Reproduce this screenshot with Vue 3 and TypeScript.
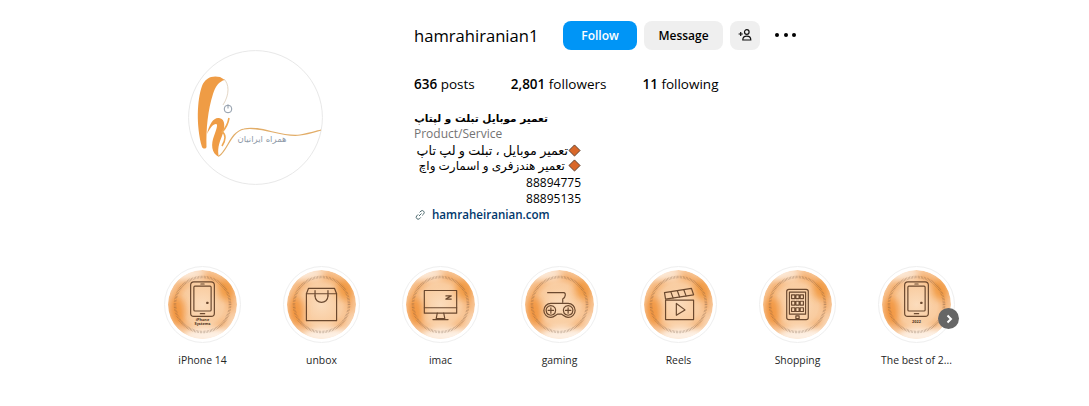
<template>
  <main class="profile">
    <header class="profile-head">
      <div class="avatar">
        <svg viewBox="0 0 135 135" width="135" height="135" aria-hidden="true">
          <circle cx="67.5" cy="67.5" r="66.9" fill="#fff" stroke="#e8e8e8" stroke-width="1" />
          <path
            d="M32 27 C24 25 17 28 14 36 C9 50 8 76 14 97 C15 99 18 99 18.5 97 C18 78 20 60 25 44 C27 37 31 31 37 30 Z"
            fill="#ef9c45"
          />
          <path
            d="M19 84 C21 74 26 67 31 68 C38 69 37 78 34 86 C31 93 29 100 31 107 C23 103 23 94 26 86 C29 78 30 74 28 74 C25 74 22 78 19 84 Z"
            fill="#ef9c45"
          />
          <path d="M36 29 C41 34 42 44 35 55" fill="none" stroke="#dccbb6" stroke-width="0.8" />
          <path d="M41 68 C40 74 38 78 34 82 C38 84 38 90 34 96" fill="none" stroke="#efa854" stroke-width="1.6" />
          <path
            d="M31 106 C40 100 42 82 56 79 C72 75 94 88 112 85 C120 84 126 82 133 80"
            fill="none"
            stroke="#e2ad68"
            stroke-width="1.2"
          />
          <circle cx="40" cy="59" r="3.8" fill="none" stroke="#8e9aa8" stroke-width="1" />
          <path d="M40 54.5 V58.5" stroke="#8e9aa8" stroke-width="1" />
          <text x="74" y="92" class="avatar-text" text-anchor="middle">همراه ایرانیان</text>
        </svg>
      </div>

      <section class="info">
        <div class="top-row">
          <h2>hamrahiranian1</h2>
          <button class="btn btn-follow">Follow</button>
          <button class="btn btn-message">Message</button>
          <button class="btn btn-suggest" aria-label="Suggested">
            <svg viewBox="0 0 14 14" width="14" height="14" fill="none" stroke="#111" stroke-width="1.2">
              <circle cx="8.8" cy="4" r="2.3" />
              <path d="M4.8 12 C4.8 9.4 6.4 8.2 8.8 8.2 C11.2 8.2 12.8 9.4 12.8 12 Z" />
              <path d="M0.6 6 H4.8 M2.7 3.9 V8.1" />
            </svg>
          </button>
          <button class="more" aria-label="Options">
            <i></i><i></i><i></i>
          </button>
        </div>

        <ul class="stats">
          <li v-for="s in stats" :key="s.label"><strong>{{ s.value }}</strong> {{ s.label }}</li>
        </ul>

        <div class="bio">
          <div class="bio-name" dir="rtl">تعمیر موبایل تبلت و لپتاپ</div>
          <div class="bio-cat">Product/Service</div>
          <div class="bio-lines" dir="rtl">
            <div class="line-a">
              <svg class="diamond" viewBox="0 0 14 14" width="13" height="13">
                <path d="M7 1 L13 7 L7 13 L1 7 Z" fill="#d9682a" stroke="#5a3a28" stroke-width="1" />
              </svg>تعمیر موبایل ، تبلت و لپ تاپ
            </div>
            <div class="line-b">
              <svg class="diamond" viewBox="0 0 14 14" width="13" height="13">
                <path d="M7 1 L13 7 L7 13 L1 7 Z" fill="#d9682a" stroke="#5a3a28" stroke-width="1" />
              </svg>
              تعمیر هندزفری و اسمارت واچ
            </div>
            <div class="num">88894775</div>
            <div class="num">88895135</div>
          </div>
          <a class="bio-link">
            <svg viewBox="0 0 12 12" width="12" height="12" fill="none" stroke="#4f6b70" stroke-width="1">
              <path d="M5 7 L7.5 4.5 M4.2 5.4 L2.6 7 A2 2 0 0 0 5.4 9.8 L6.8 8.4 M5.6 3.4 L7 2 A2 2 0 0 1 9.8 4.8 L8.2 6.4" />
            </svg>
            <span>hamraheiranian.com</span>
          </a>
        </div>
      </section>
    </header>

    <section class="highlights">
      <svg class="defs" width="0" height="0" aria-hidden="true">
        <defs>
          <radialGradient id="hl-bg" cx="50%" cy="50%" r="50%">
            <stop offset="0%" stop-color="#fbdcbc" />
            <stop offset="60%" stop-color="#f9cb9e" />
            <stop offset="82%" stop-color="#f5b070" />
            <stop offset="100%" stop-color="#f7c596" />
          </radialGradient>
          <filter id="hl-blur" x="-40%" y="-40%" width="180%" height="180%">
            <feGaussianBlur stdDeviation="3.5" />
          </filter>
        </defs>
      </svg>
      <div v-for="h in highlights" :key="h.label" class="hl">
        <div class="hl-ring">
          <svg viewBox="0 0 64 64" width="69" height="69" aria-hidden="true">
            <circle cx="32" cy="32" r="32" fill="url(#hl-bg)" />
            <g filter="url(#hl-blur)">
              <ellipse cx="9" cy="38" rx="7" ry="13" fill="#f08c2e" opacity="0.75" />
              <ellipse cx="54" cy="18" rx="8" ry="10" fill="#f0902f" opacity="0.7" />
              <ellipse cx="36" cy="60" rx="22" ry="7" fill="#fff" opacity="0.8" />
              <ellipse cx="20" cy="4" rx="15" ry="6" fill="#fff" opacity="0.65" />
              <ellipse cx="58" cy="46" rx="6" ry="10" fill="#fff" opacity="0.3" />
            </g>
            <circle cx="32" cy="32" r="25.5" fill="none" stroke="#6b5140" stroke-width="2.4" stroke-dasharray="0.45 0.9" opacity="0.5" />
            <g fill="none" stroke="#5b3a22" stroke-width="1.1" stroke-linecap="round" stroke-linejoin="round" opacity="0.9">
              <path v-for="d in h.paths" :key="d" :d="d" />
            </g>
            <text v-for="t in h.tags" :key="t.text" x="32" :y="t.y" text-anchor="middle" class="hl-tag">{{ t.text }}</text>
          </svg>
        </div>
        <div class="hl-label">{{ h.label }}</div>
      </div>
      <button class="next" aria-label="Next">
        <svg viewBox="0 0 12 12" width="12" height="12" fill="none" stroke="#fff" stroke-width="2">
          <path d="M4.5 2.5 L8 6 L4.5 9.5" />
        </svg>
      </button>
    </section>
  </main>
</template>

<script setup lang="ts">
type Highlight = {
  label: string
  paths: string[]
  tags?: { text: string; y: number }[]
}

const stats = [
  { value: '636', label: 'posts' },
  { value: '2,801', label: 'followers' },
  { value: '11', label: 'following' },
]

const phone = [
  'M24 11 H40 A3 3 0 0 1 43 14 V40 A3 3 0 0 1 40 43 H24 A3 3 0 0 1 21 40 V14 A3 3 0 0 1 24 11 Z',
  'M25 15 H39 A1 1 0 0 1 40 16 V37 A1 1 0 0 1 39 38 H25 A1 1 0 0 1 24 37 V16 A1 1 0 0 1 25 15 Z',
  'M30.5 13 H33.5',
  'M30 40.5 H34',
  'M36 30 H37 V31 H36 Z',
]

const highlights: Highlight[] = [
  {
    label: 'iPhone 14',
    paths: phone,
    tags: [
      { text: 'iPhone', y: 47 },
      { text: 'Systems', y: 51 },
    ],
  },
  {
    label: 'unbox',
    paths: [
      'M18 22 H46 V47 H18 Z',
      'M18 22 L20 17 H44 L46 22',
      'M26 24 C26 32 38 32 38 24',
      'M26 19 V24 M38 19 V24',
    ],
  },
  {
    label: 'imac',
    paths: [
      'M17 19 H47 V40 H17 Z',
      'M17 35 H47',
      'M29 40 L28 45 H36 L35 40',
      'M25 46 H39',
      'M37 24 H42 L37 27 H42',
    ],
  },
  {
    label: 'gaming',
    paths: [
      'M21 21 H36 C38 21 38 25 35 27 V30',
      'M24 31 H40 A6.5 6.5 0 0 1 40 44 C37 44 36 42 34 41 H30 C28 42 27 44 24 44 A6.5 6.5 0 0 1 24 31 Z',
      'M24 33 A4.5 4.5 0 1 0 24.01 33 Z',
      'M40 33 A4.5 4.5 0 1 0 40.01 33 Z',
      'M24 35 V40 M21.5 37.5 H26.5',
      'M40 35 V40 M37.5 37.5 H42.5',
    ],
  },
  {
    label: 'Reels',
    paths: [
      'M20 28 H46 V46 H20 Z',
      'M19 21 L44 17 L46 23 L20 27 Z',
      'M25 20.5 L27 26 M31 19.5 L33 25 M37 18.5 L39 24',
      'M30 31 L38 37 L30 42 Z',
    ],
  },
  {
    label: 'Shopping',
    paths: [
      'M24 18 H40 A2 2 0 0 1 42 20 V44 A2 2 0 0 1 40 46 H24 A2 2 0 0 1 22 44 V20 A2 2 0 0 1 24 18 Z',
      'M24.5 20.5 H39.5 V41 H24.5 Z',
      'M26.5 23 H29.5 V26.5 H26.5 Z M30.5 23 H33.5 V26.5 H30.5 Z M34.5 23 H37.5 V26.5 H34.5 Z',
      'M26.5 29 H29.5 V32.5 H26.5 Z M30.5 29 H33.5 V32.5 H30.5 Z M34.5 29 H37.5 V32.5 H34.5 Z',
      'M26.5 35 H29.5 V38.5 H26.5 Z M30.5 35 H33.5 V38.5 H30.5 Z M34.5 35 H37.5 V38.5 H34.5 Z',
      'M30.5 42.5 H33.5 V45 H30.5 Z',
    ],
  },
  { label: 'The best of 2...', paths: phone, tags: [{ text: '2022', y: 49 }] },
]
</script>

<style>
html,
body {
  background: #fff;
}
</style>

<style scoped>
.profile {
  width: 1089px;
  height: 406px;
  overflow: hidden;
  color: #000;
  background: #fff;
  font-family: 'Open Sans', 'DejaVu Sans', sans-serif;
  font-size: 13px;
}

.profile-head {
  display: flex;
  padding: 18px 0 0 188px;
}

.avatar {
  width: 226px;
  padding-top: 32px;
}

.avatar svg {
  display: block;
}

.avatar-text {
  font-family: 'DejaVu Sans', sans-serif;
  font-size: 8.5px;
  fill: #8e9aa8;
}

.top-row {
  display: flex;
  align-items: center;
  height: 34px;
}

.top-row h2 {
  width: 149px;
  margin: 0;
  font-size: 16.6px;
  font-weight: 400;
  white-space: nowrap;
}

.btn {
  height: 29px;
  padding: 0;
  border: 0;
  border-radius: 8px;
  font-family: inherit;
  font-size: 12px;
  font-weight: 600;
}

.btn-follow {
  width: 74px;
  color: #fff;
  background: #0095f6;
}

.btn-message {
  width: 79px;
  margin-left: 7px;
  background: #efefef;
}

.btn-suggest {
  display: flex;
  align-items: center;
  justify-content: center;
  width: 30px;
  margin-left: 7px;
  background: #efefef;
}

.more {
  display: flex;
  gap: 4.5px;
  margin-left: 15px;
  padding: 0;
  border: 0;
  background: none;
}

.more i {
  width: 4px;
  height: 4px;
  border-radius: 50%;
  background: #000;
}

.stats {
  display: flex;
  gap: 36px;
  margin: 22px 0 0;
  padding: 0;
  font-size: 13.5px;
  line-height: 20px;
  list-style: none;
}

.stats strong {
  font-weight: 600;
}

.bio {
  width: 167px;
  margin-top: 16px;
  line-height: 16px;
  white-space: nowrap;
}

.bio-name {
  width: 134px;
  font-family: 'DejaVu Sans', sans-serif;
  font-size: 10.5px;
  font-weight: 700;
  text-align: right;
}

.bio-cat {
  color: #737373;
  font-size: 12px;
}

.bio-lines {
  text-align: right;
}

.bio-lines > div {
  font-size: 12px;
  height: 16px;
}

.bio-lines > .line-a {
  font-size: 12.7px;
}

.bio-lines > .line-b {
  height: 17px;
}

.bio-lines > .num {
  height: 15.5px;
}

.diamond {
  vertical-align: -2px;
}

.bio-link {
  display: flex;
  align-items: center;
  gap: 6px;
  margin-top: 1px;
  color: #00376b;
  font-size: 11.6px;
  font-weight: 600;
}

.highlights {
  position: relative;
  display: flex;
  margin-top: 43px;
  padding-left: 143px;
}

.defs {
  position: absolute;
}

.hl {
  display: flex;
  flex-direction: column;
  align-items: center;
  width: 119px;
}

.hl-ring {
  display: flex;
  align-items: center;
  justify-content: center;
  width: 77px;
  height: 77px;
  border: 1px solid #efefef;
  border-radius: 50%;
  box-sizing: border-box;
  background: #fff;
}

.hl-ring svg {
  display: block;
  border-radius: 50%;
}

.hl-tag {
  font-family: 'Open Sans', sans-serif;
  font-size: 3.6px;
  font-weight: 700;
  fill: #4a3020;
}

.hl-label {
  margin-top: 9px;
  font-size: 10.4px;
  line-height: 16px;
  color: #262626;
  white-space: nowrap;
}

.next {
  position: absolute;
  top: 42px;
  left: 938px;
  display: flex;
  align-items: center;
  justify-content: center;
  width: 21px;
  height: 21px;
  padding: 0;
  border: 0;
  border-radius: 50%;
  background: #666;
}
</style>
